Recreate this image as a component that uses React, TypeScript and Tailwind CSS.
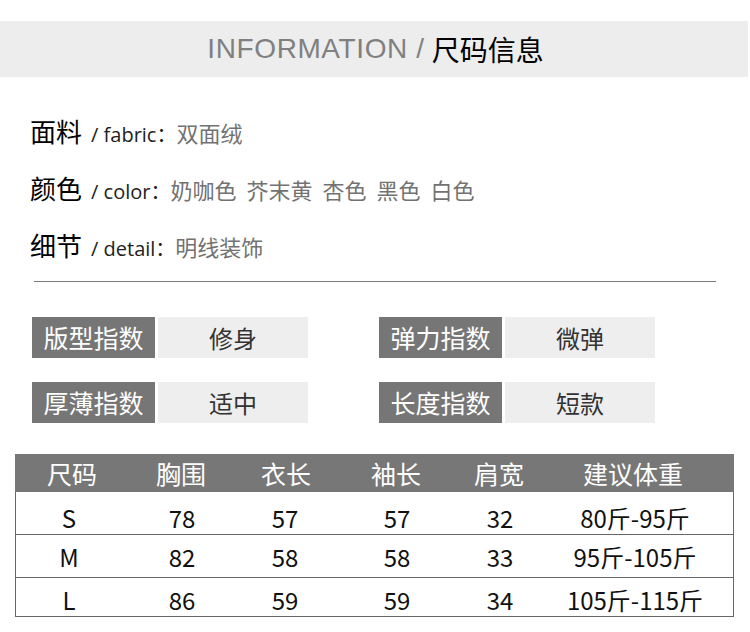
const INFO = [
  { cn: "面料", en: "fabric", value: ["双面绒"] },
  { cn: "颜色", en: "color", value: ["奶咖色", "芥末黄", "杏色", "黑色", "白色"] },
  { cn: "细节", en: "detail", value: ["明线装饰"] },
];

const INDEX = [
  [
    { label: "版型指数", value: "修身" },
    { label: "弹力指数", value: "微弹" },
  ],
  [
    { label: "厚薄指数", value: "适中" },
    { label: "长度指数", value: "短款" },
  ],
];

const HEAD = ["尺码", "胸围", "衣长", "袖长", "肩宽", "建议体重"];

const ROWS = [
  { cells: ["S", "78", "57", "57", "32", "80斤-95斤"], h: "h-[43px] pt-[9px]" },
  { cells: ["M", "82", "58", "58", "33", "95斤-105斤"], h: "h-[43px] pt-[1px]" },
  { cells: ["L", "86", "59", "59", "34", "105斤-115斤"], h: "h-[39px] pt-[5px]" },
];

const COLS = "grid grid-cols-[114px_104px_106px_114px_92px_188px]";

export default function App() {
  return (
    <div className="w-[750px] h-[632px] bg-white overflow-hidden font-['Noto_Sans_CJK_SC',sans-serif]">
      <div className="pt-[21px]">
        <div className="w-[748px] h-[56px] bg-[#ededed] flex items-center justify-center pl-[3px]">
          <span className="font-['Liberation_Sans',Arial,sans-serif] text-[28px] tracking-[0.6px] text-[#808080] leading-none">
            INFORMATION /
          </span>
          <span className="ml-[7px] text-[28px] text-black leading-none font-['Noto_Sans_CJK_SC',sans-serif]">
            尺码信息
          </span>
        </div>
      </div>

      <div className="mt-[26px] pl-[30px]">
        {INFO.map((r) => (
          <div key={r.cn} className="h-[57px] flex items-center">
            <div className="flex items-baseline">
              <span className="text-[26px] text-black leading-none">{r.cn}</span>
              <span className="ml-[9px] text-[20px] text-[#222] leading-none font-['Open_Sans','Noto_Sans_CJK_SC',sans-serif]">
                / {r.en}：
              </span>
              <span className="flex gap-[10px] text-[22px] text-[#727272] leading-none">
                {r.value.map((v) => (
                  <span key={v}>{v}</span>
                ))}
              </span>
            </div>
          </div>
        ))}
      </div>

      <div className="mt-[7px] ml-[34px] w-[682px] h-px bg-[#7a7a7a]" />

      <div className="mt-[35px] pl-[32px] flex flex-col gap-[24px]">
        {INDEX.map((row, i) => (
          <div key={i} className="flex">
            {row.map((c) => (
              <div key={c.label} className="w-[347px] flex gap-[3px]">
                <div className="w-[123px] h-[41px] bg-[#767676] flex items-center justify-center text-white text-[25px] leading-none">
                  {c.label}
                </div>
                <div className="w-[150px] h-[41px] bg-[#eeeeee] flex items-center justify-center text-[#333] text-[24px] leading-none">
                  {c.value}
                </div>
              </div>
            ))}
          </div>
        ))}
      </div>

      <div className="mt-[31px] ml-[15px] w-[719px]">
        <div className={`${COLS} h-[38px] bg-[#777777] items-center text-white text-[25px] leading-none`}>
          {HEAD.map((h, i) => (
            <div key={h} className={i === 5 ? "text-center pr-[12px]" : "text-center"}>
              {h}
            </div>
          ))}
        </div>
        {ROWS.map((r) => (
          <div
            key={r.cells[0]}
            className={`${COLS} ${r.h} items-center border-x border-b border-[#666] text-[24px] text-[#111] leading-none`}
          >
            {r.cells.map((c, i) => (
              <div
                key={i}
                className={
                  i === 0 ? "text-center pr-[8px]" : i === 5 ? "text-center pr-[10px]" : i === 2 ? "text-center pr-[4px]" : "text-center"
                }
              >
                {c}
              </div>
            ))}
          </div>
        ))}
      </div>
    </div>
  );
}
